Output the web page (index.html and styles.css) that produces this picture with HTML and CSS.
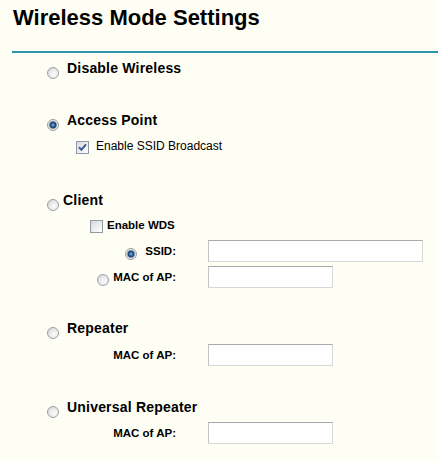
FILE: index.html
```html
<!DOCTYPE html>
<html>
<head>
<meta charset="utf-8">
<link rel="stylesheet" href="styles.css">
</head>
<body>
<div class="page">
  <h1 class="title">Wireless Mode Settings</h1>
  <div class="rule"></div>

  <div class="mode mode-disable">
    <span class="radio"></span><span class="mode-label">Disable Wireless</span>
  </div>

  <div class="mode mode-ap">
    <span class="radio on"></span><span class="mode-label">Access Point</span>
  </div>
  <div class="check-row check-ssid">
    <span class="checkbox on"><svg width="11" height="11" viewBox="0 0 11 11"><path d="M2 5.2 L4.4 7.8 L9 2.4" fill="none" stroke="#3b5b98" stroke-width="2"/></svg></span><span class="check-label">Enable SSID Broadcast</span>
  </div>

  <div class="mode mode-client">
    <span class="radio"></span><span class="mode-label tight">Client</span>
  </div>
  <div class="check-row check-wds">
    <span class="checkbox"></span><span class="check-label bold">Enable WDS</span>
  </div>
  <div class="field field-ssid">
    <div class="field-label gap-wide"><span class="radio on"></span><span>SSID:</span></div>
    <input type="text" class="text-input wide">
  </div>
  <div class="field field-client-mac">
    <div class="field-label gap-narrow"><span class="radio"></span><span>MAC of AP:</span></div>
    <input type="text" class="text-input">
  </div>

  <div class="mode mode-repeater">
    <span class="radio"></span><span class="mode-label">Repeater</span>
  </div>
  <div class="field field-rep-mac">
    <div class="field-label"><span>MAC of AP:</span></div>
    <input type="text" class="text-input">
  </div>

  <div class="mode mode-universal">
    <span class="radio"></span><span class="mode-label">Universal Repeater</span>
  </div>
  <div class="field field-ur-mac">
    <div class="field-label"><span>MAC of AP:</span></div>
    <input type="text" class="text-input">
  </div>
</div>
</body>
</html>
```
FILE: styles.css
```css
html, body {
  margin: 0;
  padding: 0;
}
body {
  background: #fefef4;
  color: #000;
  font-family: "Liberation Sans", Arial, sans-serif;
}
.page {
  width: 438px;
}
.title {
  margin: 5px 0 0 13px;
  font-size: 22px;
  line-height: 26px;
  font-weight: bold;
}
.rule {
  margin: 20px 0 0 12px;
  height: 2px;
  background: #2d96ab;
}

/* radio buttons */
.radio {
  flex: none;
  box-sizing: border-box;
  width: 12px;
  height: 12px;
  border-radius: 50%;
  border: 1px solid #9aa1a8;
  background: radial-gradient(circle at 65% 65%, #fbfbfb 0, #ececec 45%, #cfcfcf 100%);
}
.radio.on {
  background: radial-gradient(circle at 50% 50%, #86b6e0 0, #3570aa 1.6px, #163d68 3px, #8d9aa6 3.6px, #d4d4d4 4.3px, #f2f2f2 5px);
}

/* checkboxes */
.checkbox {
  flex: none;
  box-sizing: border-box;
  width: 13px;
  height: 13px;
  border: 1px solid #8f9aa6;
  background: linear-gradient(135deg, #d8d8d8 0, #f4f4f4 70%, #ffffff 100%);
  display: flex;
  align-items: center;
  justify-content: center;
}
.checkbox svg {
  display: block;
}

/* top-level modes */
.mode {
  display: flex;
  align-items: flex-start;
  height: 20px;
  padding-left: 47px;
}
.mode .radio {
  margin-top: 7px;
}
.mode-label {
  margin-left: 8px;
  font-size: 14px;
  font-weight: bold;
  line-height: 16px;
  letter-spacing: 0.2px;
}
.mode-label.tight {
  margin-left: 4px;
}
.mode-disable { margin-top: 7px; }
.mode-ap { margin-top: 32px; }
.mode-client { margin-top: 37px; }
.mode-repeater { margin-top: 32px; }
.mode-universal { margin-top: 33px; }

/* checkbox rows */
.check-row {
  display: flex;
  align-items: flex-start;
  height: 16px;
}
.check-row .checkbox {
  margin-top: 2px;
}
.check-label {
  margin-left: 7px;
  font-size: 12px;
  line-height: 14px;
}
.check-label.bold {
  margin-left: 4px;
  font-weight: bold;
  font-size: 11.5px;
}
.check-ssid {
  margin-top: 7px;
  padding-left: 76px;
}
.check-wds {
  margin-top: 6px;
  padding-left: 90px;
}

/* label + input rows */
.field {
  display: flex;
  align-items: center;
  height: 22px;
}
.field-label {
  width: 176px;
  display: flex;
  justify-content: flex-end;
  align-items: center;
  font-size: 11.5px;
  font-weight: bold;
}
.field-label .radio {
  margin-top: 5px;
}
.gap-wide { gap: 8px; }
.gap-narrow { gap: 4px; }
.text-input {
  margin: 0 0 0 32px;
  padding: 0 3px;
  box-sizing: border-box;
  width: 125px;
  height: 22px;
  background: #fff;
  border: 1px solid #d8d8d8;
  border-top-color: #a9a9a9;
  border-left-color: #c4c4c4;
  font: 12px "Liberation Sans", Arial, sans-serif;
  outline: none;
}
.text-input.wide {
  width: 215px;
}
.field-ssid { margin-top: 6px; }
.field-client-mac { margin-top: 4px; }
.field-rep-mac { margin-top: 4px; }
.field-ur-mac { margin-top: 3px; }
```
